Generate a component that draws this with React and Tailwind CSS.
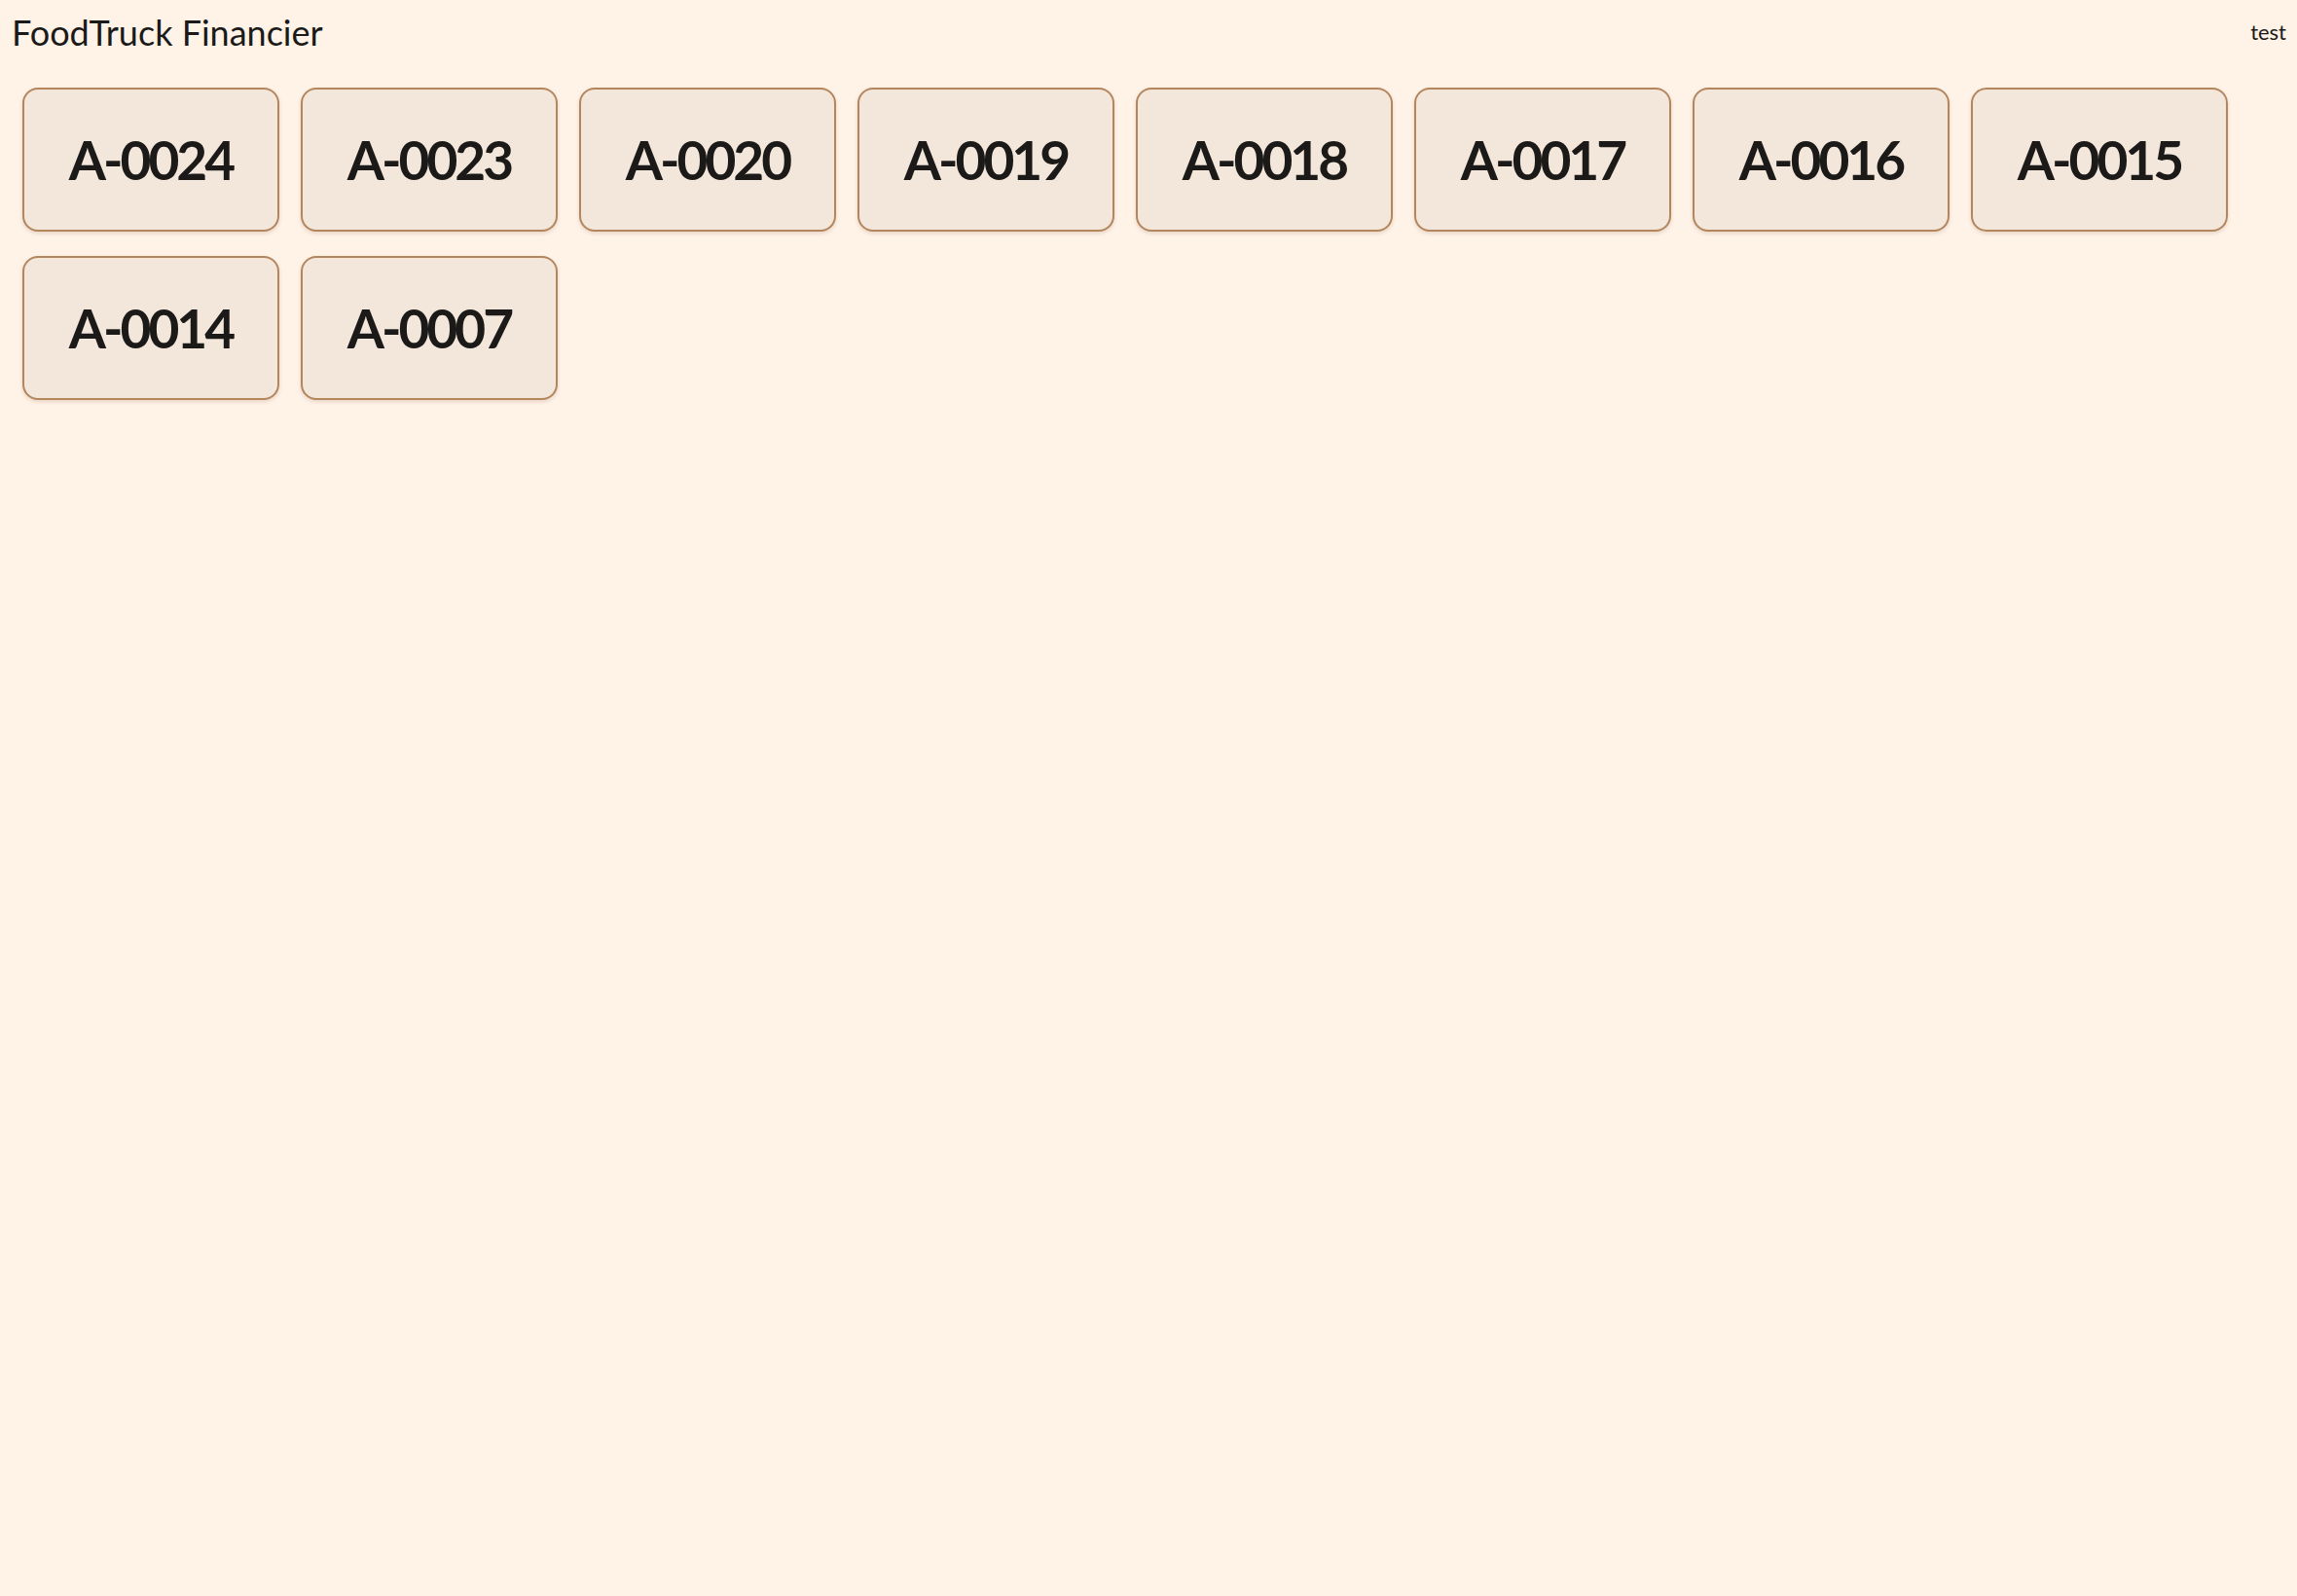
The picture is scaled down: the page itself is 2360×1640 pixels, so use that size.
const accounts = [
  "A-0024",
  "A-0023",
  "A-0020",
  "A-0019",
  "A-0018",
  "A-0017",
  "A-0016",
  "A-0015",
  "A-0014",
  "A-0007",
];

export default function App() {
  return (
    <div className="min-h-screen w-full bg-[#fff3e8] text-[#1b1a18] font-['Lato','Liberation_Sans',sans-serif]">
      {/* Top bar */}
      <header className="flex items-center justify-between pl-[12px] pr-[11px] h-[66px]">
        <h1 className="text-[36px] font-normal leading-none">
          FoodTruck Financier
        </h1>
        <span className="text-[22px] leading-none">test</span>
      </header>

      {/* Account tiles */}
      <div className="flex flex-wrap gap-x-[22px] gap-y-[25px] pl-[23px] pt-[24px]">
        {accounts.map((id) => (
          <button
            key={id}
            className="w-[264px] h-[148px] flex items-center justify-center rounded-[16px] border-2 border-[#b3865e] bg-[#f3e6da] shadow-[0_2px_4px_rgba(120,80,40,0.18)]"
          >
            <span className="text-[55px] font-bold leading-none tracking-[-3px]">
              {id}
            </span>
          </button>
        ))}
      </div>
    </div>
  );
}
